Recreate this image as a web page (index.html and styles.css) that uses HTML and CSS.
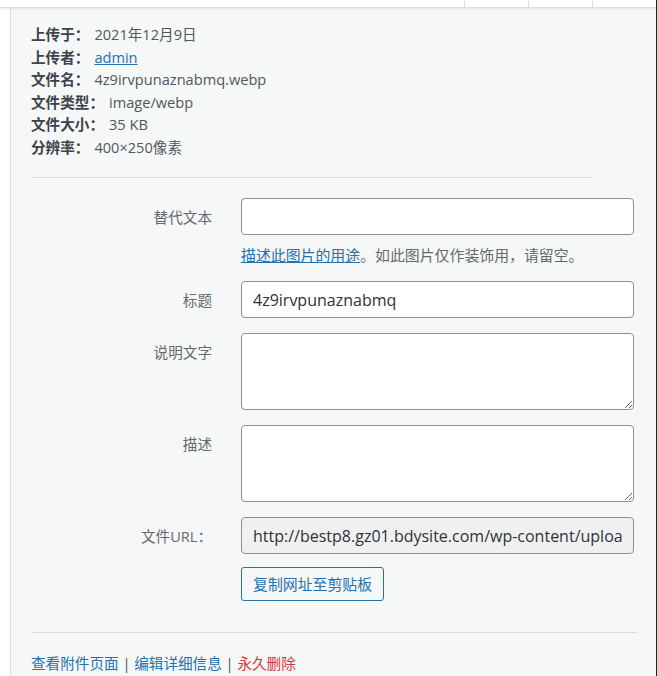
FILE: index.html
```html
<!DOCTYPE html>
<html lang="zh-CN">
<head>
<meta charset="utf-8">
<title>附件详情</title>
<link rel="stylesheet" href="styles.css">
</head>
<body>
<div class="frame">
  <div class="topbar">
    <div class="tab"></div>
    <div class="tab"></div>
    <div class="tab"></div>
  </div>
  <div class="main">
    <div class="strip"></div>
    <div class="panel">
      <div class="details">
        <div class="line"><strong>上传于：</strong>2021年12月9日</div>
        <div class="line"><strong>上传者：</strong><a href="#" class="link">admin</a></div>
        <div class="line"><strong>文件名：</strong>4z9irvpunaznabmq.webp</div>
        <div class="line"><strong>文件类型：</strong>image/webp</div>
        <div class="line"><strong>文件大小：</strong>35 KB</div>
        <div class="line"><strong>分辨率：</strong>400×250像素</div>
      </div>

      <div class="settings">
        <div class="setting">
          <label class="name">替代文本</label>
          <div class="field">
            <input type="text" class="input" value="">
            <p class="help"><a href="#" class="link">描述此图片的用途</a>。如此图片仅作装饰用，请留空。</p>
          </div>
        </div>
        <div class="setting">
          <label class="name">标题</label>
          <div class="field">
            <input type="text" class="input" value="4z9irvpunaznabmq">
          </div>
        </div>
        <div class="setting">
          <label class="name">说明文字</label>
          <div class="field">
            <textarea class="area"></textarea>
          </div>
        </div>
        <div class="setting">
          <label class="name">描述</label>
          <div class="field">
            <textarea class="area"></textarea>
          </div>
        </div>
        <div class="setting last">
          <label class="name">文件URL：</label>
          <div class="field">
            <input type="text" class="input readonly" readonly value="http://bestp8.gz01.bdysite.com/wp-content/uploads/2021/12/4z9irvpunaznabmq.webp">
            <button class="copy">复制网址至剪贴板</button>
          </div>
        </div>
      </div>

      <div class="actions">
        <a href="#" class="link plain">查看附件页面</a> <span class="sep">|</span> <a href="#" class="link plain">编辑详细信息</a> <span class="sep">|</span> <a href="#" class="delete">永久删除</a>
      </div>
    </div>
  </div>
</div>
</body>
</html>
```

FILE: styles.css
```css
* {
  box-sizing: border-box;
}

html, body {
  margin: 0;
  padding: 0;
  height: 100%;
  background: #ffffff;
}

body {
  font-family: "Open Sans", "Noto Sans CJK SC", sans-serif;
  font-size: 14.6px;
  color: #3c434a;
}

.frame {
  width: 657px;
  height: 676px;
  border-right: 1px solid #1d2327;
  display: flex;
  flex-direction: column;
  overflow: hidden;
}

.topbar {
  position: relative;
  z-index: 2;
  height: 8px;
  flex: 0 0 8px;
  background: #ffffff;
  border-bottom: 1px solid #dcdcde;
  box-shadow: 0 1px 3px rgba(0, 0, 0, 0.08);
  display: flex;
  justify-content: flex-end;
}

.tab {
  width: 64px;
  border-left: 1px solid #dcdcde;
}

.main {
  flex: 1;
  display: flex;
  min-height: 0;
}

.strip {
  width: 11px;
  flex: 0 0 11px;
  background: #ffffff;
  border-right: 1px solid #dcdcde;
}

.panel {
  flex: 1;
  background: #f6f7f7;
  padding: 15px 19px 0 20px;
}

.details {
  margin-right: 44px;
  padding-bottom: 19px;
  border-bottom: 1px solid #dcdcde;
}

.line {
  line-height: 22.5px;
  white-space: nowrap;
  color: #50575e;
}

.line strong {
  font-weight: 700;
  margin-right: 5px;
  color: #3c434a;
}

.link {
  color: #2271b1;
  text-decoration: underline;
}

.link.plain {
  text-decoration: none;
}

.delete {
  color: #d63638;
  text-decoration: none;
}

.settings {
  padding-top: 20px;
}

.setting {
  display: flex;
  margin-bottom: 15px;
}

.setting.last {
  margin-bottom: 0;
}

.name {
  width: 181px;
  flex: 0 0 181px;
  text-align: right;
  padding-top: 8px;
  line-height: 22px;
  color: #646970;
}

.field {
  width: 393px;
  margin-left: 29px;
}

.input {
  display: block;
  width: 100%;
  height: 37px;
  margin: 0;
  padding: 0 11px;
  border: 1px solid #8c8f94;
  border-radius: 4px;
  background: #ffffff;
  color: #2c3338;
  font-family: "Open Sans", "Noto Sans CJK SC", sans-serif;
  font-size: 16px;
  outline: none;
}

.input.readonly {
  background: #f0f0f1;
}

.area {
  display: block;
  width: 100%;
  height: 77px;
  margin: 0;
  padding: 6px 11px;
  border: 1px solid #8c8f94;
  border-radius: 4px;
  background: #ffffff;
  color: #2c3338;
  font-family: "Open Sans", "Noto Sans CJK SC", sans-serif;
  font-size: 16px;
  resize: vertical;
  outline: none;
}

.help {
  margin: 9px 0 0;
  font-size: 14.9px;
  line-height: 22px;
  color: #646970;
  white-space: nowrap;
}

.copy {
  display: block;
  margin-top: 13px;
  height: 34px;
  padding: 0 11px;
  border: 1px solid #2271b1;
  border-radius: 3px;
  background: #f6f7f7;
  color: #2271b1;
  font-family: "Open Sans", "Noto Sans CJK SC", sans-serif;
  font-size: 14.9px;
  line-height: 32px;
  cursor: pointer;
}

.actions {
  margin-top: 31px;
  padding-top: 19px;
  border-top: 1px solid #dcdcde;
  line-height: 22px;
  white-space: nowrap;
}

.sep {
  color: #50575e;
}
```
